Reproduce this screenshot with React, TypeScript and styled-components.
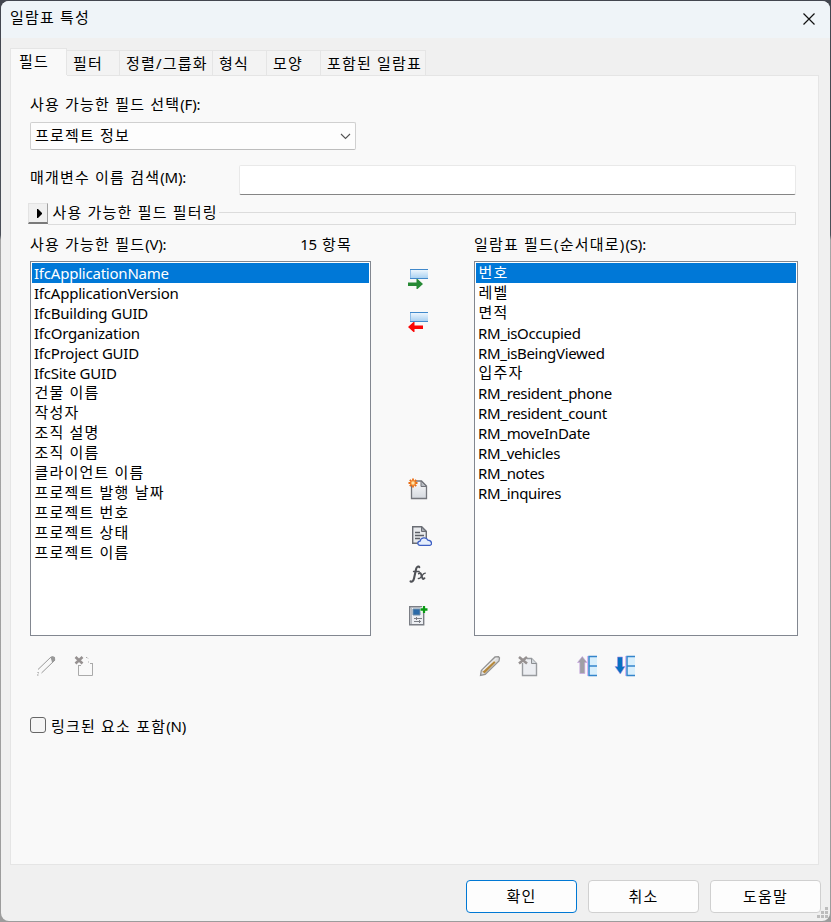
import React from "react";
import styled, { createGlobalStyle } from "styled-components";

const Global = createGlobalStyle`
  * { box-sizing: border-box; }
  body {
    margin: 0;
    background: #43464f;
    color: #000;
    font: 15px/20px "Noto Sans", "Noto Sans CJK KR", sans-serif;
  }
`;

const Desktop = styled.div`
  width: 831px;
  height: 922px;
  padding: 1px;
  background: linear-gradient(to bottom, #43464f 0, #4b5058 235px, #a5a5a5 240px, #9c9c9c 100%);
`;

const Dialog = styled.div`
  display: flex;
  flex-direction: column;
  height: 920px;
  background: #f0f0f0;
  border-radius: 8px;
  overflow: hidden;
`;

const TitleBar = styled.header`
  display: flex;
  justify-content: space-between;
  height: 37px;
  padding: 6px 14px 0 9px;
  background: #eff4f8;
`;

const Text = styled.span<{ $spacing?: number }>`
  display: block;
  white-space: pre;
  letter-spacing: ${(p) => p.$spacing ?? 1.2}px;
`;

const Latin = styled.span`
  letter-spacing: -0.2px;
`;

const CloseButton = styled.button`
  width: 14px;
  height: 14px;
  margin-top: 5px;
  padding: 0;
  border: 0;
  background: none;
  svg { display: block; }
`;

const Tabs = styled.nav`
  display: flex;
  align-items: flex-end;
  height: 28px;
  margin: 10px 0 0 9px;
`;

const Tab = styled.div<{ $w: number; $active?: boolean }>`
  width: ${(p) => p.$w}px;
  height: ${(p) => (p.$active ? 28 : 26)}px;
  padding: ${(p) => (p.$active ? "2px 0 0 8px" : "2px 0 0 6px")};
  border: 1px solid #e5e5e5;
  border-left-width: ${(p) => (p.$active ? 1 : 0)}px;
  border-bottom: 0;
  background: ${(p) => (p.$active ? "#f9f9f9" : "#f3f3f3")};
`;

const Panel = styled.main`
  width: 809px;
  height: 790px;
  margin: -1px 0 0 9px;
  padding: 18px 20px 0 19px;
  border: 1px solid #e5e5e5;
  background: #f9f9f9;
`;

const TabCover = styled.div`
  width: 56px;
  height: 1px;
  margin: -19px 0 18px -19px;
  background: #f9f9f9;
`;

const Select = styled.div`
  display: flex;
  justify-content: space-between;
  align-items: center;
  width: 326px;
  height: 28px;
  margin-top: 8px;
  padding: 0 4px 1px 4px;
  border: 1px solid #d0d0d0;
  border-bottom-color: #bdbdbd;
  border-radius: 2px;
  background: #fdfdfd;
  svg { margin-top: 2px; }
  span { margin-top: -1px; }
`;

const SearchRow = styled.div`
  display: flex;
  margin-top: 15px;
`;

const SearchLabel = styled.label`
  width: 209px;
  padding-top: 2px;
`;

const SearchInput = styled.input`
  width: 557px;
  height: 30px;
  border: 1px solid #e9e9e9;
  border-bottom-color: #858585;
  border-radius: 2px;
  background: #fff;
  outline: 0;
`;

const FilterRow = styled.div`
  display: flex;
  height: 23px;
  margin: 7px 0 0 -2px;
`;

const Expander = styled.button`
  width: 20px;
  height: 21px;
  margin-top: 1px;
  padding: 0 0 0 8px;
  border: 1px solid #e3e3e3;
  border-right-color: #a0a0a0;
  border-bottom: 2px solid #7a7a7a;
  background: #f0f0f0;
  svg { display: block; }
`;

const FilterLabel = styled.div`
  width: 171px;
  padding-left: 4.5px;
  border-bottom: 1px solid #dcdcdc;
`;

const GroupLine = styled.div`
  flex: none;
  width: 577px;
  height: 13px;
  margin-top: 10px;
  border: 1px solid #dcdcdc;
  border-left: 0;
`;

const Columns = styled.div`
  display: grid;
  grid-template-columns: 341px 103px 324px;
  margin-top: 9px;
`;

const ListHeader = styled.div`
  display: flex;
  justify-content: space-between;
  height: 27px;
  padding: 0 19px 0 0;
`;

const List = styled.ul`
  height: 375px;
  margin: 0;
  padding: 1px;
  border: 1px solid #828790;
  background: #fff;
  list-style: none;
`;

const Item = styled.li<{ $selected?: boolean; $latin?: boolean }>`
  height: 20px;
  padding-left: ${(p) => (p.$latin ? 2 : 2.5)}px;
  line-height: ${(p) => (p.$latin ? 20 : 19)}px;
  background: ${(p) => (p.$selected ? "#0078d7" : "transparent")};
  color: ${(p) => (p.$selected ? "#fff" : "#000")};
`;

const Transfer = styled.div`
  padding: 33px 0 0 37px;
`;

const Tool = styled.button<{ $top?: number; $left?: number }>`
  display: block;
  width: 24px;
  height: 24px;
  margin: ${(p) => p.$top ?? 0}px 0 0 ${(p) => p.$left ?? 0}px;
  padding: 0;
  border: 0;
  background: none;
  svg { display: block; }
`;

const ToolRow = styled.div`
  display: flex;
  margin-top: 18px;
  padding-left: 4px;
`;

const CheckRow = styled.label`
  display: flex;
  align-items: flex-start;
  gap: 5px;
  margin-top: 38px;
`;

const CheckBox = styled.span`
  width: 16px;
  height: 16px;
  margin-top: 1px;
  border: 1px solid #666;
  border-radius: 3px;
  background: #f5f5f5;
`;

const Footer = styled.footer`
  position: relative;
  display: flex;
  justify-content: flex-end;
  gap: 11px;
  height: 56px;
  padding: 15px 9px 0 0;
`;

const Button = styled.button<{ $primary?: boolean }>`
  display: flex;
  justify-content: center;
  width: 111px;
  height: 33px;
  padding: 5px 0 0;
  border: 1px solid ${(p) => (p.$primary ? "#0078d4" : "#d0d0d0")};
  border-radius: 4px;
  background: #fdfdfd;
  color: #000;
  font: inherit;
`;

const Grip = styled.svg`
  position: absolute;
  right: 1px;
  bottom: 2px;
`;

const Icon = ({ children }: { children: React.ReactNode }) => (
  <svg width="24" height="24" viewBox="0 0 24 24">{children}</svg>
);

const BlueBar = () => (
  <>
    <defs>
      <linearGradient id="bar" x2="0" y2="1">
        <stop offset="0" stopColor="#f4faff" />
        <stop offset="1" stopColor="#a3cdf0" />
      </linearGradient>
    </defs>
    <path d="M2 2h18v10H2z" fill="url(#bar)" />
    <path d="M2 2.500h18M2 11.500h18" stroke="#4189cb" />
    <path d="M2.500 3v8" stroke="#8dbce8" />
  </>
);

const AddIcon = () => (
  <Icon>
    <BlueBar />
    <path d="M0 15.500h8.500V12h1l5.500 5-5.500 5h-1v-3H0z" fill="#278a35" />
  </Icon>
);

const RemoveIcon = () => (
  <Icon>
    <BlueBar />
    <path d="M15 15.500H6.500V12h-1L0 17l5.500 5h1v-3H15z" fill="#fa0505" />
  </Icon>
);

const NewIcon = () => (
  <Icon>
    <defs>
      <linearGradient id="page" x2="0" y2="1">
        <stop offset="0" stopColor="#fbfbfc" />
        <stop offset="1" stopColor="#d5d9df" />
      </linearGradient>
    </defs>
    <path d="M3.500 6v15.500h15V9l-5-5H7" fill="url(#page)" stroke="#74767c" strokeWidth="1.300" />
    <path d="M13 4v5.500h5.500z" fill="#b9bdc3" stroke="#74767c" />
    <path d="M5 1.500v9M.5 6h9M1.800 2.800l6.400 6.400M8.200 2.800L1.800 9.200" stroke="#e96b12" strokeWidth="1.800" />
    <circle cx="5" cy="6" r="2.200" fill="#ffe4a8" stroke="#f38a2d" />
  </Icon>
);

const CloudDocIcon = () => (
  <Icon>
    <path d="M4.700 2.700h9l4.600 4.600v12H4.700z" fill="#e8eaed" stroke="#6a6d74" strokeWidth="1.400" />
    <path d="M13.500 3v4.500H18z" fill="#a8acb3" stroke="#6a6d74" />
    <path d="M7 8.500h5M7 11.500h9M7 14.500h5" stroke="#5c5f66" strokeWidth="1.300" />
    <path d="M12 21.300c-3-.1-2.800-4 .1-4.100.5-4 6.300-4.600 7.700-1.100 4.800.3 4.300 5.200 2.200 5.200z" fill="#e5eefc" stroke="#3d5fc4" strokeWidth="1.300" />
  </Icon>
);

const FormulaIcon = () => (
  <Icon>
    <g fill="none" stroke="#505257" strokeLinecap="round">
      <path d="M11.300 5.300c-.5-1.700-2.700-.6-3.200 1.700L6 16.500c-.6 2.500-2 3.800-3.500 2.800" strokeWidth="2.100" />
      <path d="M5.500 9.500h5.700" strokeWidth="1.300" />
      <path d="M10.800 11.500c1.300-.8 1.900-.5 2.300.7l1.200 3.800c.4 1.300 1.400 1.200 2.200.2" strokeWidth="1.900" />
      <path d="M17.300 11.200c-1.500-.2-2.300 1-3.600 3-1.100 1.700-2 2.900-3.400 2.200" strokeWidth="1.300" />
    </g>
  </Icon>
);

const ParamIcon = () => (
  <Icon>
    <path d="M1.700 2.700h14v18h-14z" fill="#eceef2" stroke="#7b7e85" strokeWidth="1.400" />
    <path d="M3.500 4v16" stroke="#b6bac1" />
    <path d="M5 5h7v6H5z" fill="#2b6aa8" stroke="#6d8da9" />
    <path d="M6 14.500h8M6 17.500h7M8.500 13v3M11.500 16v3" stroke="#7b7e85" />
    <path d="M12.500 5.500h7M16 2v7" stroke="#fff" strokeWidth="4" />
    <path d="M12.500 5.500h7M16 2v7" stroke="#0a9a14" strokeWidth="2.300" />
  </Icon>
);

const PencilIcon = ({ muted }: { muted?: boolean }) =>
  muted ? (
    <Icon>
      <path d="M4 15.500L17.500 2.500M7.500 19L21 6" stroke="#999" fill="none" />
      <path d="M16.500 3.500l2.200-1.500 2.300 1.200.2 2.800-3 3-.8-3z" fill="#999" />
      <path d="M3 21h1.500M3.500 18.500l1.500.5" stroke="#999" />
    </Icon>
  ) : (
    <Icon>
      <path d="M2.500 21.500l.8-5L17 3l3.500-.3 1 1.300-.5 3L7.200 20.500z" fill="#ddd" stroke="#929292" strokeWidth="1.300" />
      <path d="M5.500 18.500L16.500 7.500" stroke="#b5883b" strokeWidth="3" />
      <path d="M5 16.500L18.500 4" stroke="#ececec" strokeWidth="1.200" />
    </Icon>
  );

const DeleteIcon = ({ muted }: { muted?: boolean }) => (
  <Icon>
    {muted ? (
      <path d="M4.500 11v10.500h14V9M4.500 11.500H7M12 3.500h1l1 1M14.500 7.500v1M16 9.500h2.500" fill="none" stroke="#aaa" />
    ) : (
      <>
        <path d="M5.500 9v12.500h14V9.500l-5-5H10" fill="#eceef2" stroke="#999ca0" strokeWidth="1.400" />
        <path d="M14.500 4.500v5h5" fill="#d5dade" stroke="#8c8f93" />
      </>
    )}
    <path d={muted ? "M1.500 3l7 6.500M8.500 3l-7 6.500" : "M2 3l8 6.500M10 3L2 9.500"} stroke="#969191" strokeWidth="2.600" />
  </Icon>
);

const OrderIcon = ({ down }: { down?: boolean }) => (
  <Icon>
    <path d="M12 2.500h9v19h-9z" fill="#d9effc" />
    <path d="M21 2.500h-8v19h8M13 12h8" fill="none" stroke="#3485cb" strokeWidth="1.500" />
    <path d="M11.500 2v20" stroke="#d8b6f1" />
    {down ? (
      <path d="M3.500 3h5v9.500H11l-4.700 7.500L1 12.500h2.500z" fill="#0870c0" stroke="#aa8be3" strokeWidth=".6" />
    ) : (
      <path d="M3.800 19.500h5V8.500H11L6.300 2.500 1.500 8.500h2.300z" fill="#a09fa5" stroke="#c9a2e6" strokeWidth=".6" />
    )}
  </Icon>
);

const available = [
  "IfcApplicationName",
  "IfcApplicationVersion",
  "IfcBuilding GUID",
  "IfcOrganization",
  "IfcProject GUID",
  "IfcSite GUID",
  "건물 이름",
  "작성자",
  "조직 설명",
  "조직 이름",
  "클라이언트 이름",
  "프로젝트 발행 날짜",
  "프로젝트 번호",
  "프로젝트 상태",
  "프로젝트 이름",
];

const scheduled = [
  "번호",
  "레벨",
  "면적",
  "RM_isOccupied",
  "RM_isBeingViewed",
  "입주자",
  "RM_resident_phone",
  "RM_resident_count",
  "RM_moveInDate",
  "RM_vehicles",
  "RM_notes",
  "RM_inquires",
];

const tabs: [string, number][] = [
  ["필드", 57],
  ["필터", 53],
  ["정렬/그룹화", 93],
  ["형식", 54],
  ["모양", 54],
  ["포함된 일람표", 105],
];

const FieldList = ({ items, spacing }: { items: string[]; spacing: number }) => (
  <List>
    {items.map((name, i) => {
      const latin = /^[A-Z]/.test(name);
      return (
        <Item key={name} $selected={i === 0} $latin={latin}>
          <Text $spacing={latin ? spacing : undefined}>{name}</Text>
        </Item>
      );
    })}
  </List>
);

export default function App() {
  return (
    <Desktop>
      <Global />
      <Dialog>
        <TitleBar>
          <Text>일람표 특성</Text>
          <CloseButton aria-label="닫기">
            <svg width="14" height="14" viewBox="0 0 14 14">
              <path d="M1.500 1.500l11 11M12.500 1.500l-11 11" stroke="#111" strokeWidth="1.200" />
            </svg>
          </CloseButton>
        </TitleBar>
        <Tabs>
          {tabs.map(([name, w], i) => (
            <Tab key={name} $w={w} $active={i === 0}>
              <Text>{name}</Text>
            </Tab>
          ))}
        </Tabs>
        <Panel>
          <TabCover />
          <Text>사용 가능한 필드 선택<Latin>(F):</Latin></Text>
          <Select>
            <Text>프로젝트 정보</Text>
            <svg width="11" height="7" viewBox="0 0 11 7">
              <path d="M1 1l4.500 4.500L10 1" fill="none" stroke="#555" strokeWidth="1.100" />
            </svg>
          </Select>
          <SearchRow>
            <SearchLabel>
              <Text>매개변수 이름 검색<Latin>(M):</Latin></Text>
            </SearchLabel>
            <SearchInput />
          </SearchRow>
          <FilterRow>
            <Expander aria-label="펼치기">
              <svg width="6" height="9" viewBox="0 0 6 9">
                <path d="M0 0h1l4 4v1L1 9H0z" />
              </svg>
            </Expander>
            <FilterLabel>
              <Text>사용 가능한 필드 필터링</Text>
            </FilterLabel>
            <GroupLine />
          </FilterRow>
          <Columns>
            <section>
              <ListHeader>
                <Text>사용 가능한 필드<Latin>(V):</Latin></Text>
                <Text><Latin>15</Latin> 항목</Text>
              </ListHeader>
              <FieldList items={available} spacing={-0.22} />
              <ToolRow>
                <Tool><PencilIcon muted /></Tool>
                <Tool $left={16}><DeleteIcon muted /></Tool>
              </ToolRow>
            </section>
            <Transfer>
              <Tool><AddIcon /></Tool>
              <Tool $top={19}><RemoveIcon /></Tool>
              <Tool $top={143}><NewIcon /></Tool>
              <Tool $top={23}><CloudDocIcon /></Tool>
              <Tool $top={14}><FormulaIcon /></Tool>
              <Tool $top={18}><ParamIcon /></Tool>
            </Transfer>
            <section>
              <ListHeader>
                <Text>일람표 필드(순서대로)<Latin>(S):</Latin></Text>
              </ListHeader>
              <FieldList items={scheduled} spacing={-0.32} />
              <ToolRow>
                <Tool><PencilIcon /></Tool>
                <Tool $left={15}><DeleteIcon /></Tool>
                <Tool $left={35}><OrderIcon /></Tool>
                <Tool $left={14}><OrderIcon down /></Tool>
              </ToolRow>
            </section>
          </Columns>
          <CheckRow>
            <CheckBox />
            <Text>링크된 요소 포함<Latin>(N)</Latin></Text>
          </CheckRow>
        </Panel>
        <Footer>
          <Button $primary><Text>확인</Text></Button>
          <Button><Text>취소</Text></Button>
          <Button><Text>도움말</Text></Button>
          <Grip width="12" height="12" viewBox="0 0 12 12">
            <path d="M8 0h3v3H8zM4 4h3v3H4zM8 4h3v3H8zM0 8h3v3H0zM4 8h3v3H4zM8 8h3v3H8z" fill="#bdbdbd" />
          </Grip>
        </Footer>
      </Dialog>
    </Desktop>
  );
}
